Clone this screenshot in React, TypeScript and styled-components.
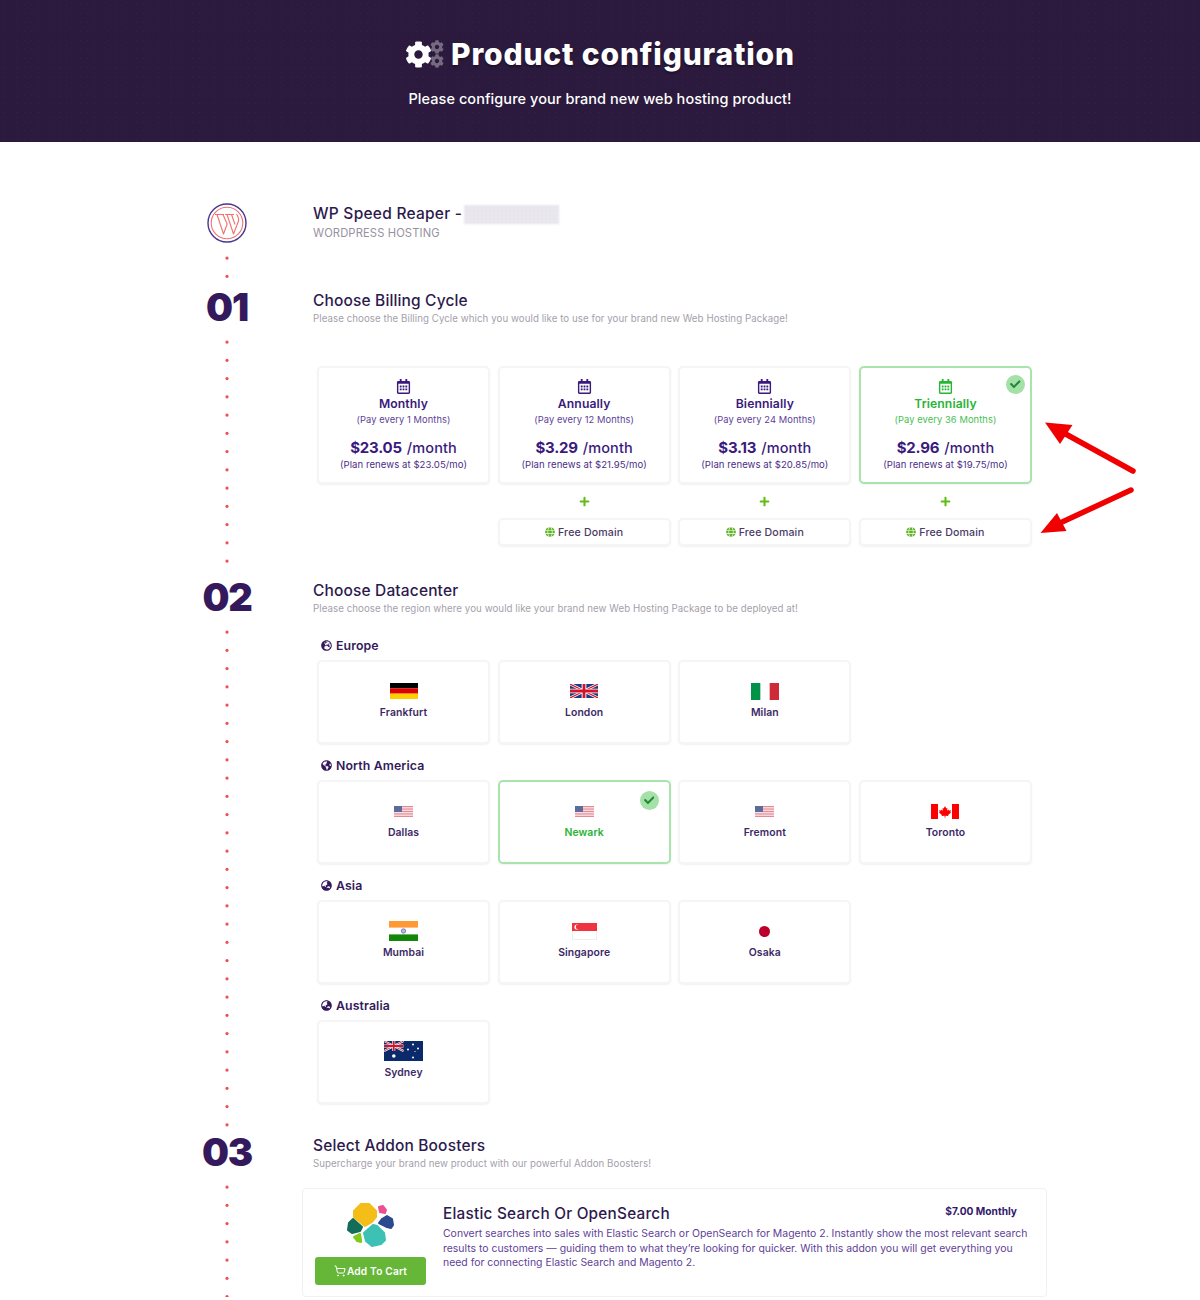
import React from "react";
import styled, { createGlobalStyle } from "styled-components";
import { FaCog, FaCheck, FaGlobe, FaGlobeAmericas, FaGlobeAsia, FaGlobeEurope, FaPlus, FaRegCalendarAlt } from "react-icons/fa";
import { ShoppingCart } from "lucide-react";

const Global = createGlobalStyle`
  html, body { margin: 0; padding: 0; background: #fff; }
  body { font-family: Inter, "Open Sans", sans-serif; color: #2d1a4d; }
  * { box-sizing: border-box; }
`;

const Page = styled.div`position: relative; width: 1200px; height: 1300px; overflow: hidden;`;

const Hero = styled.header`
  height: 142px;
  background-color: #2b1a3d;
  background-image:
    radial-gradient(circle, rgba(255,255,255,.035) .6px, transparent 1px),
    radial-gradient(circle, rgba(255,255,255,.025) .6px, transparent 1px);
  background-size: 7px 9px, 11px 5px;
  display: flex;
  flex-direction: column;
  align-items: center;
  color: #fff;
  padding-top: 34px;
`;
const TitleRow = styled.div`display: flex; align-items: center; height: 40px; gap: 7px;`;
const GearCluster = styled.div`display: flex; align-items: center; font-size: 27px; line-height: 0;`;
const SmallGears = styled.div`display: flex; flex-direction: column; font-size: 14px; opacity: .35; margin-left: -2px;`;
const Title = styled.h1`margin: 0; font-size: 30px; font-weight: 800; letter-spacing: .85px; line-height: 40px; text-shadow: 0 2px 2px rgba(0,0,0,.35);`;
const Subtitle = styled.p`margin: 14px 0 0; font-size: 14.5px; font-weight: 500; line-height: 22px; letter-spacing: .065px;`;

const Main = styled.main`padding: 60px 0 0 187px; width: 1036px;`;
const Section = styled.section<{ $pad?: number; $h?: number }>`
  display: grid;
  grid-template-columns: 80px 723px;
  column-gap: 46px;
  padding-bottom: ${p => p.$pad ?? 0}px;
  ${p => (p.$h ? `height: ${p.$h}px;` : "")}
`;
const Rail = styled.div<{ $end?: number }>`
  display: flex; flex-direction: column; align-items: center;
  margin-bottom: ${p => -(p.$end ?? 0)}px;
`;
const StepNumber = styled.div`font-size: 38px; font-weight: 900; line-height: 34px; height: 40px; color: #341a5c; letter-spacing: -1.2px;`;
const Dots = styled.div<{ $top: number; $gap?: number }>`
  flex: 1; align-self: stretch;
  margin-top: ${p => p.$top}px;
  margin-bottom: ${p => p.$gap ?? 0}px;
  background-image: radial-gradient(circle at center, #ef4f4f 1.3px, transparent 1.9px);
  background-size: 100% 18.25px;
`;
const LogoWrap = styled.div`height: 41px; padding-top: 1px; line-height: 0;`;

const ProductHead = styled.div`padding-top: 2px;`;
const ProductName = styled.div`display: flex; align-items: center; font-size: 15.5px; line-height: 20px; font-weight: 500; color: #2d1a4d; letter-spacing: .25px;`;
const Censored = styled.span`
  display: inline-block; width: 95px; height: 19px; margin-left: 2px;
  background-color: #ecebf0;
  background-image: radial-gradient(circle, #dedce4 .8px, transparent 1.2px);
  background-size: 4px 4px;
  filter: blur(1px);
`;
const ProductType = styled.div`font-size: 11.2px; line-height: 16px; margin-top: 1px; color: #97929f; letter-spacing: .13px;`;

const HeadBlock = styled.div`padding-top: 1px;`;
const Heading = styled.h2`margin: 0; font-size: 15.5px; line-height: 20px; font-weight: 500; color: #2d1a4d; letter-spacing: .15px;`;
const SubHeading = styled.p`margin: 0; font-size: 9.7px; line-height: 16px; color: #a5a0ab; letter-spacing: .07px;`;

const BillingGrid = styled.div`
  margin-top: 39px; padding: 0 4px;
  display: grid; grid-template-columns: repeat(4, 173px); column-gap: 7.67px;
`;
const BillingColumn = styled.div`display: flex; flex-direction: column;`;
const Card = styled.div<{ $active?: boolean }>`
  position: relative;
  background: #fff;
  border-radius: 5px;
  border: 2px solid ${p => (p.$active ? "#a8e4ac" : "#f5f5f6")};
  box-shadow: 0 1px 2px rgba(60,60,80,.07);
  color: ${p => (p.$active ? "#27b534" : "#3a1a7c")};
  text-align: center;
`;
const PlanCard = styled(Card)`height: 118px; padding-top: 10.5px;`;
const PlanIcon = styled.div`font-size: 15px; line-height: 0; height: 16px;`;
const PlanName = styled.div`font-size: 12.2px; font-weight: 600; line-height: 16px; margin-top: 1.5px; letter-spacing: .1px;`;
const PlanTerm = styled.div<{ $active?: boolean }>`font-size: 9.3px; line-height: 14px; margin-top: 1px; color: ${p => (p.$active ? "#46c052" : "#5d3f98")}; letter-spacing: .1px;`;
const PlanPrice = styled.div`font-size: 14.5px; font-weight: 500; line-height: 20px; margin-top: 11px; color: #3a1a7c; letter-spacing: .1px;`;
const PriceValue = styled.span`font-size: 15px; font-weight: 700; letter-spacing: -.2px; margin-right: 1px;`;
const PlanRenew = styled.div`font-size: 9.55px; line-height: 14px; color: #4b2d86; letter-spacing: .07px;`;
const CheckBadge = styled.div<{ $city?: boolean }>`
  position: absolute;
  top: ${p => (p.$city ? 9 : 7)}px;
  right: ${p => (p.$city ? 10 : 5)}px;
  width: 19px; height: 19px; border-radius: 50%;
  background: #a4e0a8; color: #1f8a36; font-size: 10.5px;
  display: flex; align-items: center; justify-content: center;
`;
const PlusRow = styled.div`height: 34px; display: flex; align-items: center; justify-content: center; color: #62bc16; font-size: 11px;`;
const DomainBox = styled(Card)`
  height: 28px; color: #4a3a66; font-size: 10.6px; font-weight: 500; letter-spacing: .15px;
  display: flex; align-items: center; justify-content: center; gap: 3px;
  svg { color: #62b52a; font-size: 10px; }
`;

const RegionBlock = styled.div`padding-top: 9px;`;
const RegionsWrap = styled.div`padding-top: 7px;`;
const RegionLabel = styled.div`
  display: flex; align-items: center; gap: 4px; height: 24px; margin-bottom: 3px; padding-left: 8px;
  font-size: 12.3px; font-weight: 600; color: #341a5c; letter-spacing: .12px;
  svg { font-size: 11px; }
`;
const RegionGrid = styled.div`
  padding: 0 4px; display: grid; grid-template-columns: repeat(4, 173px); column-gap: 7.67px;
`;
const CityCard = styled(Card)`height: 84px; padding-top: 17px; display: flex; flex-direction: column; align-items: center;`;
const FlagBox = styled.div`height: 24px; display: flex; align-items: center; justify-content: center;`;
const CityName = styled.div<{ $active?: boolean }>`
  font-size: 10.4px; font-weight: 600; line-height: 14px; margin-top: 3px; letter-spacing: .1px;
  color: ${p => (p.$active ? "#27b534" : "#3c2a66")};
`;

const AddonCard = styled.div`
  margin: 16px -11px 0; height: 109px; display: flex;
  border: 1px solid #f1f1f2; border-radius: 4px; background: #fff;
`;
const AddonSide = styled.div`
  width: 140px; flex: none; padding: 11px 17px 0 12px; display: flex; flex-direction: column; align-items: center; gap: 9px;
`;
const CartButton = styled.button`
  width: 100%; height: 28px; border: 0; border-radius: 3px; background: #66b637; color: #fff;
  font: 600 10.2px Inter, sans-serif; letter-spacing: .15px;
  display: flex; align-items: center; justify-content: center; gap: 1px;
`;
const AddonBody = styled.div`flex: 1; padding: 14px 14px 0 0;`;
const AddonTop = styled.div`display: flex; justify-content: space-between; align-items: flex-start; padding-right: 15px; margin-bottom: 2px;`;
const AddonTitle = styled.h3`margin: 0; font-size: 15.3px; line-height: 22px; font-weight: 500; color: #2d1a4d; letter-spacing: .25px;`;
const AddonPrice = styled.div`font-size: 10.2px; font-weight: 700; color: #341a6c; line-height: 16px;`;
const AddonText = styled.p`margin: 0; font-size: 10.45px; line-height: 14.5px; color: #5f3f98; letter-spacing: 0;`;

const ArrowLayer = styled.svg`position: absolute; left: 1030px; top: 412px; pointer-events: none;`;

const WpLogo = () => (
  <svg width="40" height="40" viewBox="0 0 40 40" fill="none">
    <circle cx="20" cy="20" r="19" stroke="#4b3591" strokeWidth="1.4" />
    <circle cx="20" cy="20" r="15.8" stroke="#f2706e" strokeWidth="1.1" />
    <path d="M8 11.500h9M18 11.500h9M10 11.500L16.500 31L20.200 21L16 11.500M20 11.500L26.500 31L31.500 18c.8-2.500-.5-4.500-2-7M24.500 11.500L28 21.500" stroke="#f2706e" strokeWidth="1.1" strokeLinejoin="round" />
  </svg>
);

const ElasticLogo = () => (
  <svg width="48" height="48" viewBox="0 0 48 48" strokeLinejoin="round" strokeWidth="2">
    <path d="M7 11L14 4H22L29 11V17L25 22L18 26L7 17z" fill="#f5bd17" stroke="#f5bd17" />
    <path d="M32 7L36 6L39 10L38 13L33 12z" fill="#ec4f92" stroke="#ec4f92" />
    <path d="M35 19L40 16L45 19L46 25L44 28L40 27L32 23z" fill="#2a4990" stroke="#2a4990" />
    <path d="M6 19L15 27L13 31L5 33L1 30L2 23z" fill="#146d58" stroke="#146d58" />
    <path d="M26 25L30 26L37 33L38 40L34 44L25 46L19 41L17 33z" fill="#3cc1b4" stroke="#3cc1b4" />
    <path d="M7 37L13 34L14 40L14 42L10 41z" fill="#82c91e" stroke="#82c91e" />
  </svg>
);

const Flag: React.FC<{ w: number; h: number; vw?: number; vh?: number; fade?: boolean; children: React.ReactNode }> = ({ w, h, vw, vh, fade, children }) => (
  <svg width={w} height={h} viewBox={`0 0 ${vw ?? w} ${vh ?? h}`} opacity={fade ? 0.75 : 1} preserveAspectRatio="none">{children}</svg>
);

const Germany = () => (
  <Flag w={28} h={16} vw={3} vh={3}>
    <rect width="3" height="1" y="0" fill="#000" /><rect width="3" height="1" y="1" fill="#d00" /><rect width="3" height="1" y="2" fill="#ffce00" />
  </Flag>
);
const UnionJack = ({ w = 28, h = 14 }: { w?: number; h?: number }) => (
  <Flag w={w} h={h} vw={60} vh={30}>
    <rect width="60" height="30" fill="#1f3a7d" />
    <path d="M0 0L60 30M60 0L0 30" stroke="#fff" strokeWidth="6" />
    <path d="M0 0L60 30M60 0L0 30" stroke="#cf142b" strokeWidth="2.500" />
    <path d="M30 0V30M0 15H60" stroke="#fff" strokeWidth="10" />
    <path d="M30 0V30M0 15H60" stroke="#cf142b" strokeWidth="6" />
  </Flag>
);
const Italy = () => (
  <Flag w={28} h={17} vw={3} vh={3}>
    <rect width="1" height="3" fill="#009246" /><rect x="2" width="1" height="3" fill="#ce2b37" />
  </Flag>
);
const Usa = () => (
  <Flag w={19} h={11} vw={19} vh={13} fade>
    <rect width="19" height="13" fill="#fff" />
    {[0, 2, 4, 6, 8, 10, 12].map(y => <rect key={y} y={y} width="19" height="1" fill="#d6485a" />)}
    <rect width="8" height="7" fill="#233a7c" />
  </Flag>
);
const Canada = () => (
  <svg width="28" height="15" viewBox="0 0 28 15">
    <rect width="28" height="15" fill="#fff" />
    <rect width="7" height="15" fill="#f00" /><rect x="21" width="7" height="15" fill="#f00" />
    <path d="M14 2l1.300 2.400 1.200-.6-.5 3 1.500-1.400.4 1.100 2-.3-.6 2 .8.4-3 2.400.3 1.100-3-.4v2h-.8v-2l-3 .4.3-1.100-3-2.400.8-.4-.6-2 2 .3.4-1.100 1.500 1.400-.5-3 1.200.6z" fill="#f00" />
  </svg>
);
const India = () => (
  <svg width="29" height="20" viewBox="0 0 29 20">
    <rect width="29" height="6.600" fill="#ff9933" /><rect y="13.400" width="29" height="6.600" fill="#138808" />
    <circle cx="14.500" cy="10" r="2.200" fill="#b8bbdc" stroke="#5d62a8" strokeWidth=".7" />
  </svg>
);
const Singapore = () => (
  <svg width="25" height="17" viewBox="0 0 25 17">
    <rect x=".5" y=".5" width="24" height="16" fill="#fff" stroke="#eeeeee" /><rect width="25" height="8" fill="#ef3340" />
    <circle cx="5" cy="4" r="2.600" fill="#fff" /><circle cx="6.200" cy="4" r="2.400" fill="#ef3340" />
  </svg>
);
const Japan = () => (
  <svg width="11" height="11" viewBox="0 0 11 11"><circle cx="5.500" cy="5.500" r="5.500" fill="#bc002d" /></svg>
);
const Australia = () => (
  <svg width="39" height="20" viewBox="0 0 39 20">
    <rect width="39" height="20" fill="#0a2a6c" />
    <path d="M0 0L19.500 10M19.500 0L0 10" stroke="#fff" strokeWidth="2" />
    <path d="M0 0L19.500 10M19.500 0L0 10" stroke="#cf142b" strokeWidth=".8" />
    <path d="M9.750 0V10M0 5H19.500" stroke="#fff" strokeWidth="3" />
    <path d="M9.750 0V10M0 5H19.500" stroke="#cf142b" strokeWidth="1.800" />
    <circle cx="9.800" cy="15" r="1.800" fill="#fff" /><circle cx="29" cy="16.500" r="1" fill="#fff" />
    <circle cx="29" cy="3.500" r="1" fill="#fff" /><circle cx="24" cy="8.500" r="1" fill="#fff" /><circle cx="34" cy="7.500" r="1" fill="#fff" /><circle cx="31" cy="10.500" r=".6" fill="#fff" />
  </svg>
);

const plans = [
  { name: "Monthly", term: "(Pay every 1 Months)", price: "$23.05", renew: "(Plan renews at $23.05/mo)", domain: false, active: false },
  { name: "Annually", term: "(Pay every 12 Months)", price: "$3.29", renew: "(Plan renews at $21.95/mo)", domain: true, active: false },
  { name: "Biennially", term: "(Pay every 24 Months)", price: "$3.13", renew: "(Plan renews at $20.85/mo)", domain: true, active: false },
  { name: "Triennially", term: "(Pay every 36 Months)", price: "$2.96", renew: "(Plan renews at $19.75/mo)", domain: true, active: true },
];

const regions = [
  { label: "Europe", icon: <FaGlobeEurope />, cities: [["Frankfurt", <Germany key="f" />], ["London", <UnionJack key="l" />], ["Milan", <Italy key="m" />]] },
  { label: "North America", icon: <FaGlobeAmericas />, cities: [["Dallas", <Usa key="d" />], ["Newark", <Usa key="n" />], ["Fremont", <Usa key="r" />], ["Toronto", <Canada key="t" />]] },
  { label: "Asia", icon: <FaGlobeAsia />, cities: [["Mumbai", <India key="i" />], ["Singapore", <Singapore key="s" />], ["Osaka", <Japan key="o" />]] },
  { label: "Australia", icon: <FaGlobeAsia />, cities: [["Sydney", <Australia key="a" />]] },
] as { label: string; icon: React.ReactNode; cities: [string, React.ReactNode][] }[];

export default function App() {
  return (
    <Page>
      <Global />
      <Hero>
        <TitleRow>
          <GearCluster>
            <FaCog />
            <SmallGears><FaCog /><FaCog /></SmallGears>
          </GearCluster>
          <Title>Product configuration</Title>
        </TitleRow>
        <Subtitle>Please configure your brand new web hosting product!</Subtitle>
      </Hero>
      <Main>
        <Section $h={88}>
          <Rail>
            <LogoWrap><WpLogo /></LogoWrap>
            <Dots $top={6} />
          </Rail>
          <ProductHead>
            <ProductName>WP Speed Reaper -<Censored /></ProductName>
            <ProductType>WORDPRESS HOSTING</ProductType>
          </ProductHead>
        </Section>

        <Section $pad={34}>
          <Rail $end={34}>
            <StepNumber>01</StepNumber>
            <Dots $top={3} $gap={12} />
          </Rail>
          <HeadBlock>
            <Heading>Choose Billing Cycle</Heading>
            <SubHeading>Please choose the Billing Cycle which you would like to use for your brand new Web Hosting Package!</SubHeading>
            <BillingGrid>
              {plans.map(p => (
                <BillingColumn key={p.name}>
                  <PlanCard $active={p.active}>
                    {p.active && <CheckBadge><FaCheck /></CheckBadge>}
                    <PlanIcon><FaRegCalendarAlt /></PlanIcon>
                    <PlanName>{p.name}</PlanName>
                    <PlanTerm $active={p.active}>{p.term}</PlanTerm>
                    <PlanPrice><PriceValue>{p.price}</PriceValue> /month</PlanPrice>
                    <PlanRenew>{p.renew}</PlanRenew>
                  </PlanCard>
                  {p.domain && (
                    <>
                      <PlusRow><FaPlus /></PlusRow>
                      <DomainBox><FaGlobe />Free Domain</DomainBox>
                    </>
                  )}
                </BillingColumn>
              ))}
            </BillingGrid>
          </HeadBlock>
        </Section>

        <Section $pad={31}>
          <Rail $end={31}>
            <StepNumber>02</StepNumber>
            <Dots $top={3} $gap={2} />
          </Rail>
          <HeadBlock>
            <Heading>Choose Datacenter</Heading>
            <SubHeading>Please choose the region where you would like your brand new Web Hosting Package to be deployed at!</SubHeading>
            <RegionsWrap>
              {regions.map(r => (
                <RegionBlock key={r.label}>
                  <RegionLabel>{r.icon}{r.label}</RegionLabel>
                  <RegionGrid>
                    {r.cities.map(([city, flag]) => {
                      const active = city === "Newark";
                      return (
                        <CityCard key={city} $active={active}>
                          {active && <CheckBadge $city><FaCheck /></CheckBadge>}
                          <FlagBox>{flag}</FlagBox>
                          <CityName $active={active}>{city}</CityName>
                        </CityCard>
                      );
                    })}
                  </RegionGrid>
                </RegionBlock>
              ))}
            </RegionsWrap>
          </HeadBlock>
        </Section>

        <Section>
          <Rail>
            <StepNumber>03</StepNumber>
            <Dots $top={3} />
          </Rail>
          <HeadBlock>
            <Heading>Select Addon Boosters</Heading>
            <SubHeading>Supercharge your brand new product with our powerful Addon Boosters!</SubHeading>
            <AddonCard>
              <AddonSide>
                <ElasticLogo />
                <CartButton><ShoppingCart size={12} />Add To Cart</CartButton>
              </AddonSide>
              <AddonBody>
                <AddonTop>
                  <AddonTitle>Elastic Search Or OpenSearch</AddonTitle>
                  <AddonPrice>$7.00 Monthly</AddonPrice>
                </AddonTop>
                <AddonText>Convert searches into sales with Elastic Search or OpenSearch for Magento 2. Instantly show the most relevant search results to customers — guiding them to what they’re looking for quicker. With this addon you will get everything you need for connecting Elastic Search and Magento 2.</AddonText>
              </AddonBody>
            </AddonCard>
          </HeadBlock>
        </Section>
      </Main>
      <ArrowLayer width="110" height="130" viewBox="1030 412 110 130">
        <path d="M1133 471L1062 432" stroke="#f00000" strokeWidth="5.500" strokeLinecap="round" />
        <path d="M1045 422.500L1072.500 425L1060 444z" fill="#f00000" />
        <path d="M1131 490L1060 523" stroke="#f00000" strokeWidth="5.500" strokeLinecap="round" />
        <path d="M1040.500 533L1057 513L1066.500 531z" fill="#f00000" />
      </ArrowLayer>
    </Page>
  );
}
